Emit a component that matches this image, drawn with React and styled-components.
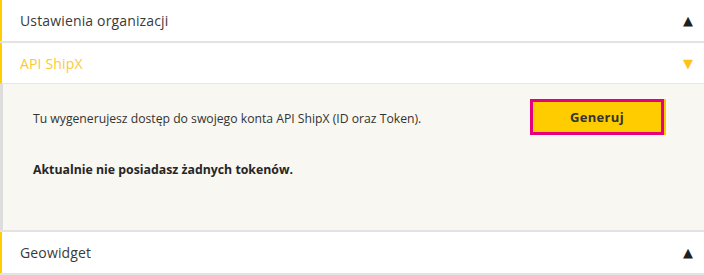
import React from 'react';
import styled, { createGlobalStyle } from 'styled-components';

const GlobalStyle = createGlobalStyle`
  html, body {
    margin: 0;
    padding: 0;
    background: #ffffff;
  }
  body {
    font-family: 'Open Sans', 'Liberation Sans', sans-serif;
    color: #333333;
  }
`;

const Accordion = styled.div`
  width: 704px;
  display: flex;
  flex-direction: column;
`;

const Section = styled.section`
  border-bottom: 2px solid #e3e3e3;
  background: #ffffff;
`;

const Header = styled.div`
  height: 41px;
  display: flex;
  align-items: center;
  justify-content: space-between;
  padding: 0 11px 0 18px;
  border-left: 2px solid #ffcc00;
  border-bottom: ${(p) => (p.open ? '1px solid #e6e6e6' : 'none')};
  box-sizing: border-box;
  cursor: pointer;
`;

const Title = styled.span`
  font-size: 14px;
  color: ${(p) => (p.open ? '#fcc934' : '#3a3a3a')};
  letter-spacing: 0.15px;
`;

const Arrow = styled.span`
  font-size: 13px;
  line-height: 1;
  color: ${(p) => (p.open ? '#ffc21a' : '#1f1f1f')};
  font-family: 'DejaVu Sans', sans-serif;
`;

const Body = styled.div`
  background: #f8f7f1;
  border-left: 3px solid #dddddd;
  height: 146px;
  box-sizing: border-box;
  padding: 15px 40px 0 30px;
`;

const Row = styled.div`
  display: flex;
  align-items: center;
  justify-content: space-between;
`;

const Text = styled.p`
  margin: 2px 0 0;
  font-size: 12.2px;
  color: #333333;
`;

const Strong = styled.p`
  margin: 26px 0 0;
  font-size: 12.3px;
  font-weight: 700;
  color: #262626;
`;

const Button = styled.button`
  width: 134px;
  height: 36px;
  background: #ffcc00;
  border: 3px solid #e6007e;
  box-shadow: 2px 0 0 #ffcc00;
  font-family: inherit;
  font-size: 13px;
  font-weight: 700;
  color: #333333;
  letter-spacing: 0.3px;
  cursor: pointer;
`;

function Item({ title, open, children }) {
  return (
    <Section>
      <Header open={open}>
        <Title open={open}>{title}</Title>
        <Arrow open={open}>{open ? '▼' : '▲'}</Arrow>
      </Header>
      {open && children}
    </Section>
  );
}

export default function App() {
  return (
    <>
      <GlobalStyle />
      <Accordion>
        <Item title="Ustawienia organizacji" />
        <Item title="API ShipX" open>
          <Body>
            <Row>
              <Text>Tu wygenerujesz dostęp do swojego konta API ShipX (ID oraz Token).</Text>
              <Button>Generuj</Button>
            </Row>
            <Strong>Aktualnie nie posiadasz żadnych tokenów.</Strong>
          </Body>
        </Item>
        <Item title="Geowidget" />
      </Accordion>
    </>
  );
}
